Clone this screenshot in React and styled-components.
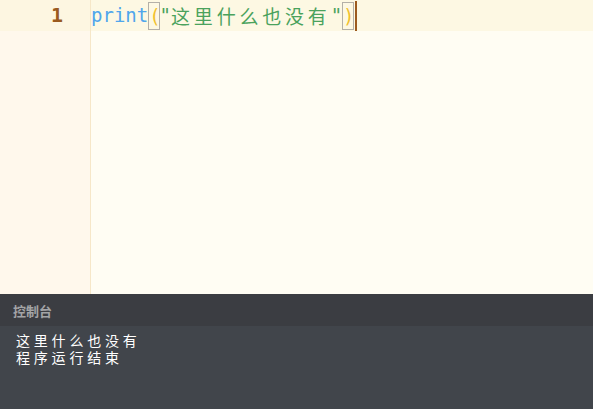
import React from "react";
import styled, { createGlobalStyle } from "styled-components";

const Global = createGlobalStyle`
  html, body { margin: 0; padding: 0; height: 100%; }
  body { width: 593px; height: 409px; overflow: hidden; }
  #root { height: 100%; }
`;

const Page = styled.div`
  display: flex;
  flex-direction: column;
  width: 593px;
  height: 409px;
`;

const Editor = styled.div`
  flex: 1;
  display: flex;
  background: #fffdf3;
  min-height: 0;
`;

const Gutter = styled.div`
  width: 90px;
  flex-shrink: 0;
  background: #fff8ec;
  border-right: 1px solid #f6e7c8;
`;

const LineNo = styled.div`
  height: 31px;
  line-height: 31px;
  padding-right: 27px;
  text-align: right;
  font-family: "DejaVu Sans Mono", "Liberation Mono", monospace;
  font-size: 20px;
  font-weight: bold;
  color: #9a5a1e;
  background: ${(p) => (p.$active ? "#fdf6e1" : "transparent")};
`;

const Code = styled.div`
  flex: 1;
  min-width: 0;
`;

const Line = styled.div`
  height: 31px;
  line-height: 31px;
  display: flex;
  align-items: center;
  font-family: "DejaVu Sans Mono", "Liberation Mono", monospace;
  font-size: 19px;
  white-space: pre;
  background: ${(p) => (p.$active ? "#fdf8e3" : "transparent")};
`;

const Tok = styled.span`
  color: ${(p) => p.$c};
`;

const Cjk = styled.span`
  font-family: "Noto Sans CJK SC", sans-serif;
  font-size: 19px;
  letter-spacing: 3.8px;
  color: #4aa25c;
`;

const Bracket = styled.span`
  display: inline-block;
  box-sizing: border-box;
  width: 11.4px;
  height: 28px;
  line-height: 26px;
  text-align: center;
  color: #f2c12e;
  border: 1px solid #b4b0a8;
`;

const Cursor = styled.span`
  display: inline-block;
  width: 2px;
  height: 30px;
  background: #9c5a1f;
  margin-left: 1px;
`;

const Console = styled.div`
  height: 115px;
  display: flex;
  flex-direction: column;
  font-family: "Noto Sans CJK SC", sans-serif;
`;

const ConsoleHeader = styled.div`
  height: 32px;
  background: #3b3d42;
  display: flex;
  align-items: center;
  padding-left: 13px;
  font-size: 13px;
  font-weight: bold;
  color: #a3a4a6;
`;

const ConsoleBody = styled.div`
  flex: 1;
  background: #41454b;
  padding: 6px 0 0 16px;
`;

const OutLine = styled.div`
  font-size: 14px;
  line-height: 17px;
  letter-spacing: 3.8px;
  color: #ffffff;
`;

export default function App() {
  return (
    <Page>
      <Global />
      <Editor>
        <Gutter>
          <LineNo $active>1</LineNo>
        </Gutter>
        <Code>
          <Line $active>
            <Tok $c="#4fa6ec">print</Tok>
            <Bracket>(</Bracket>
            <Tok $c="#4aa25c">"</Tok>
            <Cjk>这里什么也没有</Cjk>
            <Tok $c="#4aa25c">"</Tok>
            <Bracket>)</Bracket>
            <Cursor />
          </Line>
        </Code>
      </Editor>
      <Console>
        <ConsoleHeader>控制台</ConsoleHeader>
        <ConsoleBody>
          <OutLine>这里什么也没有</OutLine>
          <OutLine>程序运行结束</OutLine>
        </ConsoleBody>
      </Console>
    </Page>
  );
}
